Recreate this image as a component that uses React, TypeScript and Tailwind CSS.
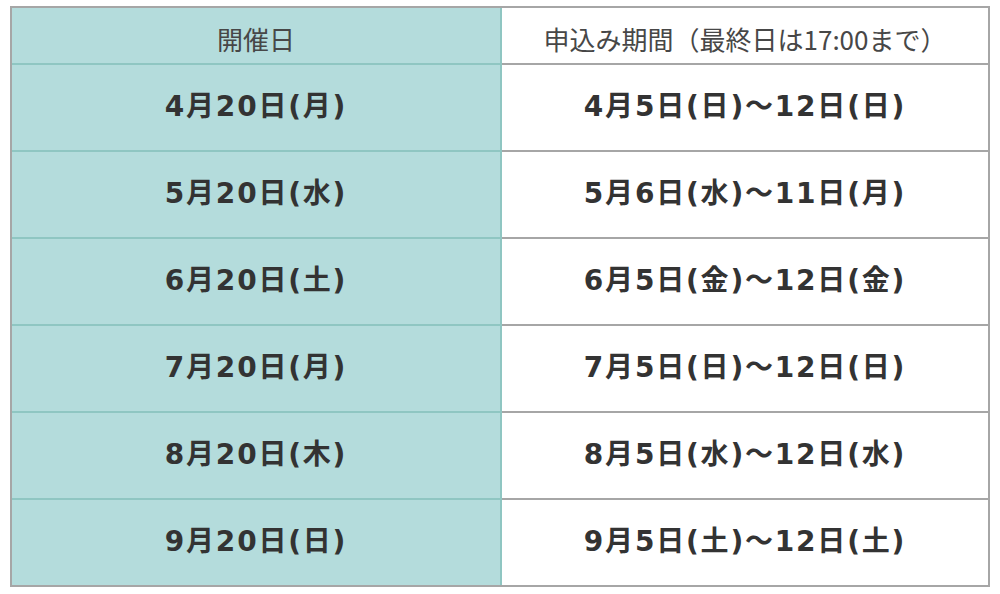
const rows: [string, string][] = [
  ['4月20日(月)', '4月5日(日)〜12日(日)'],
  ['5月20日(水)', '5月6日(水)〜11日(月)'],
  ['6月20日(土)', '6月5日(金)〜12日(金)'],
  ['7月20日(月)', '7月5日(日)〜12日(日)'],
  ['8月20日(木)', '8月5日(水)〜12日(水)'],
  ['9月20日(日)', '9月5日(土)〜12日(土)'],
]

const bodyFont = { fontFamily: '"DejaVu Sans", "Noto Sans CJK JP", sans-serif' }

export default function App() {
  return (
    <div className="w-[1000px] h-[594px] bg-white pt-[6px] pl-[10px]" style={{ fontFamily: '"Noto Sans CJK JP", "Noto Sans", sans-serif' }}>
      <div className="w-[980px] border-2 border-[#a6a6a6] grid grid-cols-[490px_1fr]">
        <div className="h-[57px] pt-[6px] bg-[#b4dcdc] border-b-2 border-r-2 border-[#8fc6c2] flex items-center justify-center text-[26px] text-[#474747]">
          開催日
        </div>
        <div className="h-[57px] pt-[6px] border-b-2 border-[#a6a6a6] flex items-center justify-center text-[26px] text-[#474747]">
          申込み期間（最終日は17:00まで）
        </div>
        {rows.map(([day, period], i) => {
          const last = i === rows.length - 1
          return [
            <div
              key={`d${i}`}
              style={bodyFont}
              className={`${last ? 'h-[85px]' : 'h-[87px] border-b-2'} pb-[2px] bg-[#b4dcdc] border-r-2 border-[#8fc6c2] flex items-center justify-center text-[28px] tracking-[1.8px] font-bold text-[#333]`}
            >
              {day}
            </div>,
            <div
              key={`p${i}`}
              style={bodyFont}
              className={`${last ? 'h-[85px]' : 'h-[87px] border-b-2'} pb-[2px] border-[#a6a6a6] flex items-center justify-center text-[28px] tracking-[1.8px] font-bold text-[#333]`}
            >
              {period}
            </div>,
          ]
        })}
      </div>
    </div>
  )
}
